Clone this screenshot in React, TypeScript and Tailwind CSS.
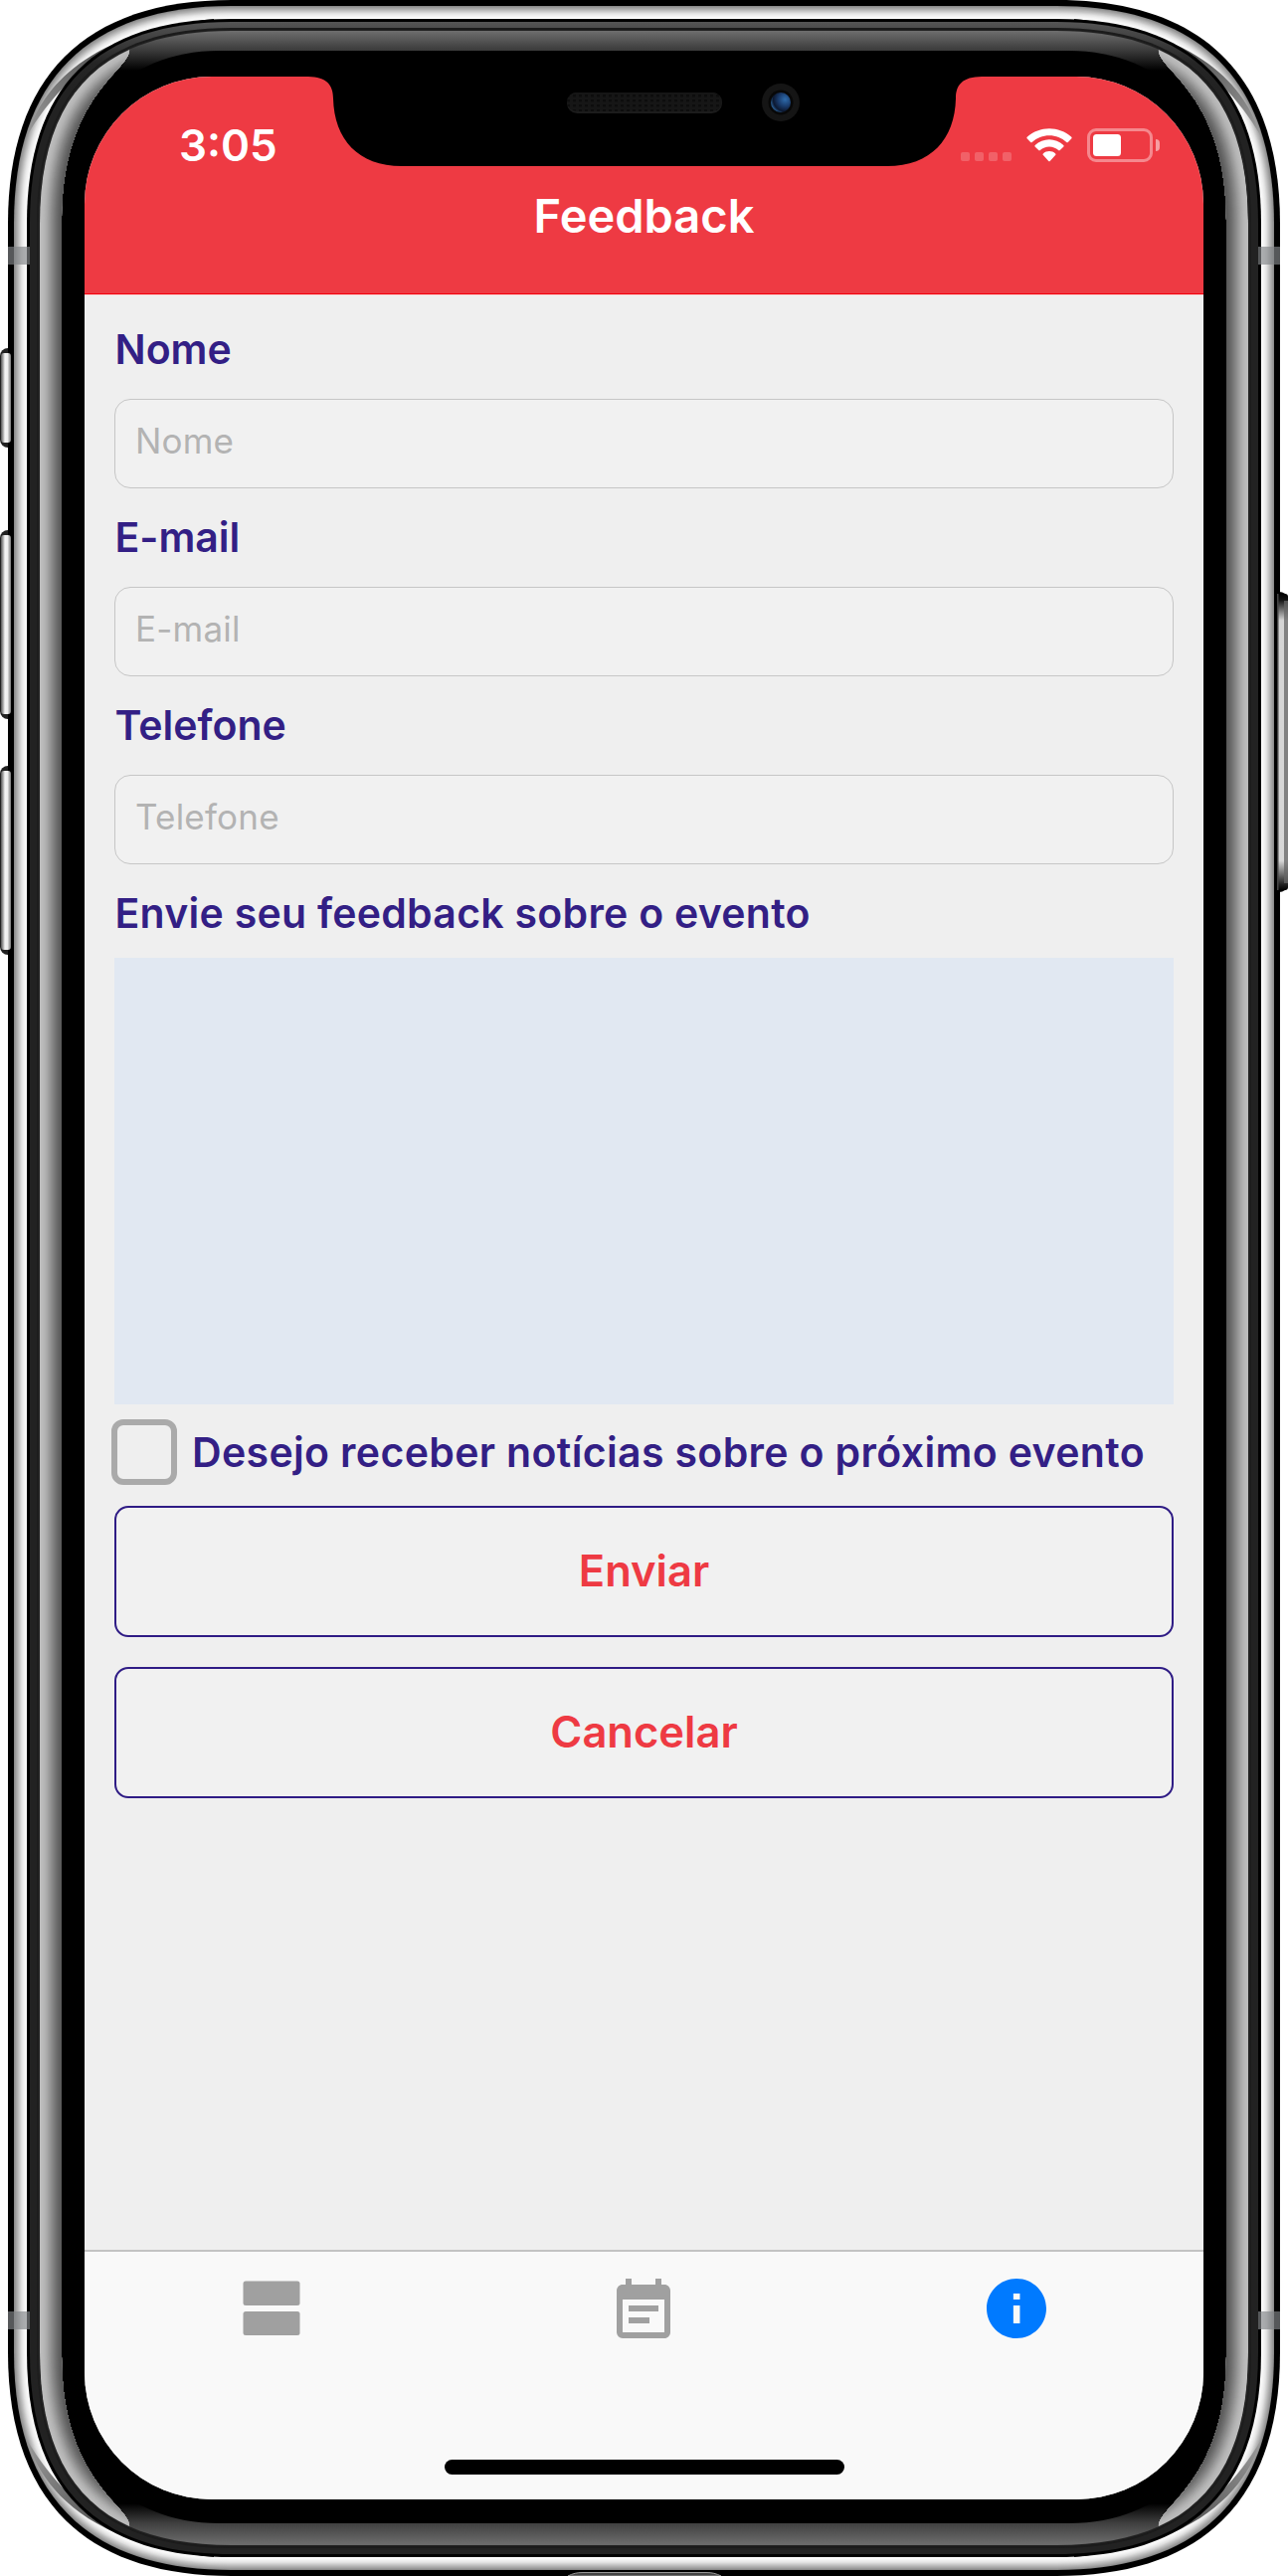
import type { ReactNode } from "react";

const W = 1295;
const H = 2590;

/* Rounded outline with soft corners, inset by dx / dy from the phone's edge. */
function outline(dx: number, dy: number) {
  const d = (dx + dy) / 2;
  const l = 8 + dx;
  const r = W - 8 - dx;
  const t = dy;
  const b = H - dy;
  const ex = 225 - dx;
  const ey = 225 - dy;
  const k = ((8 * (57 - 0.293 * d)) / (225 - d) - 1) / 3;
  const kx = ex * k;
  const ky = ey * k;
  return `M${l} ${t + ey}C${l} ${t + ky} ${l + kx} ${t} ${l + ex} ${t}H${r - ex}C${r - kx} ${t} ${r} ${t + ky} ${r} ${t + ey}V${b - ey}C${r} ${b - ky} ${r - kx} ${b} ${r - ex} ${b}H${l + ex}C${l + kx} ${b} ${l} ${b - ky} ${l} ${b - ey}Z`;
}

const silver = ["#8c8c8c", "#999999", "#a5a5a5", "#b0b0b0", "#bcbcbc", "#c8c8c8", "#d4d4d4", "#e0e0e0", "#e8e8e8", "#efefef", "#f4f4f4", "#f8f8f8", "#fcfcfc"];
const sheen = ["#bcbcbc", "#bbbbbb", "#bababa", "#b8b8b8", "#b5b5b5", "#b1b1b1", "#acacac", "#a7a7a7", "#a1a1a1", "#9b9b9b", "#959595", "#8e8e8e", "#888888", "#828282", "#7c7c7c", "#767676", "#707070", "#6b6b6b", "#666666", "#616161", "#5d5d5d", "#595959"];

const corners = ["", `translate(${W} 0) scale(-1 1)`, `translate(0 ${H}) scale(1 -1)`, `translate(${W} ${H}) scale(-1 -1)`];
const leftSheen = "M40 222C40 128 72 74 130 49C131 54 127 60 117 71C82 108 62 152 62 222V2368C62 2438 82 2482 117 2519C127 2530 131 2536 130 2541C72 2516 40 2462 40 2368Z";

function PhoneFrame() {
  return (
    <svg className="absolute inset-0 h-[2590px] w-[1295px]" viewBox="0 0 1295 2590" aria-hidden="true">
      <defs>
        <linearGradient id="glass" x1="0" y1="31" x2="0" y2="2557" gradientUnits="userSpaceOnUse">
          <stop offset="0" stopColor="#6e6e6e" />
          <stop offset="0.0079" stopColor="#3a3a3a" />
          <stop offset="0.0158" stopColor="#000" />
          <stop offset="0.9842" stopColor="#000" />
          <stop offset="0.9921" stopColor="#404040" />
          <stop offset="1" stopColor="#6a6a6a" />
        </linearGradient>
        <linearGradient id="rim" x1="0" y1="22" x2="0" y2="90" gradientUnits="userSpaceOnUse">
          <stop offset="0" stopColor="#555" />
          <stop offset="0.12" stopColor="#4a4a4a" />
          <stop offset="0.6" stopColor="#252525" />
          <stop offset="1" stopColor="#222" />
        </linearGradient>
        <linearGradient id="crescent" x1="27" y1="135" x2="215" y2="20" gradientUnits="userSpaceOnUse">
          <stop offset="0" stopColor="#999" />
          <stop offset="0.35" stopColor="#666" />
          <stop offset="0.8" stopColor="#2c2c2c" />
          <stop offset="1" stopColor="#111" />
        </linearGradient>
        <linearGradient id="key" x1="0" x2="1">
          <stop offset="0" stopColor="#555" />
          <stop offset="0.25" stopColor="#b5b5b5" />
          <stop offset="0.4" stopColor="#f5f5f5" />
          <stop offset="0.65" stopColor="#eee" />
          <stop offset="1" stopColor="#777" />
        </linearGradient>
        <linearGradient id="power" x1="0" x2="0" y1="0" y2="1">
          <stop offset="0" stopColor="#000" />
          <stop offset="0.02" stopColor="#111" />
          <stop offset="0.09" stopColor="#d5d5d5" />
          <stop offset="0.9" stopColor="#d8d8d8" />
          <stop offset="0.98" stopColor="#222" />
          <stop offset="1" stopColor="#000" />
        </linearGradient>
        <clipPath id="sheenLeft"><path d={leftSheen} /></clipPath>
      </defs>

      {/* side keys */}
      {[[350, 100], [533, 190], [770, 190]].map(([y, h]) => (
        <rect key={y} x="0" y={y} width="24" height={h} rx="8" fill="#222" />
      ))}
      <path d="M1280 595H1286Q1293 595 1295 602V890Q1293 897 1286 897H1280Z" fill="#000" />

      <path d={outline(0, 0)} fill="#000" />
      {[[350, 100], [533, 190], [770, 190]].map(([y, h]) => (
        <rect key={y} x="1" y={y + 5} width="10" height={h - 10} rx="3" fill="url(#key)" />
      ))}
      <rect x="1284" y="597" width="11" height="298" rx="3" fill="url(#power)" />
      <rect x="1284" y="597" width="1.5" height="298" fill="#444" />
      <rect x="1291" y="604" width="4" height="284" fill="#666" opacity="0.75" />
      {silver.map((c, i) => <path key={c} d={outline(6 + i, 6 + i)} fill={c} />)}
      {corners.map((t) => (
        <path key={t} transform={t || undefined} d="M27 137C40 96 78 34 215 19V23C142 24 72 60 27 137Z" fill="url(#crescent)" />
      ))}
      <path d={outline(19, 19)} fill="#000" />
      <path d={outline(22, 22)} fill="url(#rim)" />
      <path d={outline(29, 28)} fill="#1b1b1b" />
      <path d={outline(30, 30)} fill="#222" />
      <path d={outline(32, 31)} fill="url(#glass)" />
      <path d="M62 216C62 120 125 51 220 51H1075C1170 51 1233 120 1233 216V2374C1233 2470 1170 2537 1075 2537H220C125 2537 62 2470 62 2374Z" fill="#000" />
      {corners.slice(0, 2).map((t) => (
        <g key={t} transform={t || undefined}>
          <g clipPath="url(#sheenLeft)">
            {sheen.map((c, i) => <path key={c} d={outline(32 + i, 31 + i)} fill={c} />)}
          </g>
        </g>
      ))}
      {/* antenna bands */}
      {[8, 1265].map((x) => [248, 2324].map((y) => (
        <rect key={`${x}-${y}`} x={x} y={y} width="22" height="18" fill="#828688" opacity="0.66" />
      )))}
      {/* lightning port */}
      <path d="M571 2590C576 2587.500 580 2586.500 586 2586.500H710C716 2586.500 720 2587.500 725 2590Z" fill="#444" stroke="#999" />
    </svg>
  );
}

function Notch() {
  return (
    <svg className="absolute top-0 left-[225px] h-[91px] w-[677px]" viewBox="310 77 677 91" aria-hidden="true">
      <defs>
        <pattern id="mesh" width="6" height="5" patternUnits="userSpaceOnUse">
          <rect width="6" height="5" fill="#161616" />
          <rect width="3" height="2.500" fill="#0d0d0d" />
        </pattern>
        <radialGradient id="lens" cx="0.72" cy="0.35" r="0.75">
          <stop offset="0" stopColor="#2e6bab" />
          <stop offset="0.45" stopColor="#1a3c6d" />
          <stop offset="0.8" stopColor="#0c1830" />
          <stop offset="1" stopColor="#2a5f95" />
        </radialGradient>
      </defs>
      <path d="M308 76V77C328 77 335 85 335 99C336 140 360 167 404 167H892C936 167 960 140 961 99C961 85 968 77 988 77V76Z" fill="#000" />
      <rect x="570" y="93" width="156" height="21" rx="10.500" fill="#1c1c1c" />
      <rect x="570" y="93" width="156" height="19" rx="9.500" fill="url(#mesh)" />
      <circle cx="785" cy="103" r="19" fill="#151515" />
      <circle cx="785" cy="103" r="12.500" fill="#080808" />
      <circle cx="785" cy="103" r="10" fill="url(#lens)" />
    </svg>
  );
}

function StatusIcons() {
  return (
    <div className="flex items-center">
      <div className="mt-[23px] flex gap-[5px]">
        {[0, 1, 2, 3].map((i) => <span key={i} className="size-[9px] rounded-[2px] bg-white/20" />)}
      </div>
      <svg className="ml-[15px] h-[34px] w-[46px]" viewBox="0 0 46 34" aria-hidden="true">
        <path d="M0.600 10.300Q0 9.500 0.700 8.800C7 3 15 0.200 23 0.200S39 3 45.300 8.800Q46 9.500 45.400 10.300L41.800 13.900Q41.100 14.500 40.300 13.900C35.500 9.500 29.500 7.200 23 7.200S10.500 9.500 5.700 13.900Q4.900 14.500 4.200 13.900Z" fill="#fff" />
        <path d="M8.600 18.500Q8 17.800 8.700 17.100C12.700 13.400 17.800 11.300 23 11.300S33.300 13.400 37.300 17.100Q38 17.800 37.400 18.500L33.700 22.100Q33 22.700 32.200 22.100C29.500 19.700 26.400 18.400 23 18.400S16.500 19.700 13.800 22.100Q13 22.700 12.300 22.100Z" fill="#fff" />
        <path d="M16.700 26.700Q16.100 26 16.800 25.400C18.600 23.800 20.800 23 23 23S27.400 23.800 29.200 25.400Q29.900 26 29.300 26.700L23.700 33Q23 33.700 22.300 33Z" fill="#fff" />
      </svg>
      <div className="ml-[15px] flex items-center">
        <div className="h-[34px] w-[66px] rounded-[9px] border-[3px] border-white/40 p-[3px]">
          <div className="h-[22px] w-[28px] rounded-[3.5px] bg-white" />
        </div>
        <div className="ml-[3px] h-[12px] w-[4px] rounded-r-full bg-white/50" />
      </div>
    </div>
  );
}

function Field({ label, type = "text" }: { label: string; type?: string }) {
  return (
    <label className="block">
      <span className="flex h-[99px] items-center pl-[0.5px] text-[41px] font-semibold text-[#331f85]">{label}</span>
      <input
        type={type}
        placeholder={label}
        className="block h-[90px] w-full rounded-[16px] border-[1.5px] border-[#c6c6c6] bg-[#f1f1f1] px-[20px] pb-[7px] text-[35px] tracking-[0.2px] outline-none placeholder:text-[#b3b3b3] placeholder:opacity-100"
      />
    </label>
  );
}

function ActionButton({ children }: { children: ReactNode }) {
  return (
    <button className="flex h-[132px] w-full items-center justify-center rounded-[14px] border-2 border-[#2f1c85] bg-[#f1f1f1] text-[43.5px] font-semibold text-[#ee3a43]">
      {children}
    </button>
  );
}

function TabBar() {
  return (
    <nav className="flex h-[251px] shrink-0 flex-col items-center border-t-2 border-[#c3c3c3] bg-[#f9f9f9]">
      <div className="grid w-full grid-cols-3 pt-[21px]">
        <button className="flex justify-center" aria-label="Lista">
          <svg className="size-[72px]" viewBox="0 0 72 72" fill="#a0a0a0">
            <rect x="7.500" y="8.500" width="57" height="24.500" rx="2.500" />
            <rect x="7.500" y="39" width="57" height="24" rx="2.500" />
          </svg>
        </button>
        <button className="flex justify-center pr-[2px]" aria-label="Agenda">
          <svg className="mt-[3px] size-[72px]" viewBox="0 0 24 24" fill="#a0a0a0">
            <path d="M17 10H7v2h10v-2zm2-7h-1V1h-2v2H8V1H6v2H5c-1.110 0-1.990.9-1.990 2L3 19a2 2 0 0 0 2 2h14c1.100 0 2-.9 2-2V5c0-1.100-.9-2-2-2zm0 16H5V8h14v11zm-5-5H7v2h7v-2z" />
          </svg>
        </button>
        <button className="flex justify-center pr-[2px]" aria-label="Sobre">
          <svg className="size-[72px]" viewBox="0 0 24 24" fill="#007aff">
            <path d="M12 2C6.480 2 2 6.480 2 12s4.480 10 10 10 10-4.480 10-10S17.520 2 12 2zm1.150 15h-2.200v-6h2.200v6zm0-8h-2.200V7h2.200v2z" />
          </svg>
        </button>
      </div>
      <div className="mt-auto mb-[25px] h-[15px] w-[402px] rounded-[8px] bg-black" />
    </nav>
  );
}

export default function App() {
  return (
    <div className="relative h-[2590px] w-[1295px] overflow-hidden bg-white font-[Inter,sans-serif]">
      <PhoneFrame />
      <div className="relative pt-[77px] pl-[85px]">
        <div className="relative flex h-[2436px] w-[1125px] flex-col overflow-hidden rounded-[128px] bg-[#efefef]">
          <header className="h-[220px] shrink-0 border-b border-[#f9d5d5] bg-[#ee3a43] text-white shadow-[inset_0_-1px_0_#f2000c]">
            <div className="flex h-[118px] items-center justify-between pt-[20px] pr-[44px] pl-[95px]">
              <span className="text-[44px] font-semibold">3:05</span>
              <StatusIcons />
            </div>
            <h1 className="-mt-[5px] text-center text-[47px] leading-[54px] font-semibold">Feedback</h1>
          </header>
          <Notch />

          <form className="flex flex-1 flex-col px-[30px] pt-[5px]">
            <Field label="Nome" />
            <Field label="E-mail" type="email" />
            <Field label="Telefone" type="tel" />
            <label className="block">
              <span className="flex h-[94px] items-center pt-[5px] pl-[0.5px] text-[41px] font-semibold tracking-[0.27px] text-[#331f85]">
                Envie seu feedback sobre o evento
              </span>
              <textarea className="block h-[449px] w-full resize-none bg-[#e1e8f2] outline-none" />
            </label>
            <label className="mt-[15px] -ml-[3px] flex items-center gap-[15px] whitespace-nowrap">
              <input type="checkbox" className="size-[66px] shrink-0 appearance-none rounded-[12px] border-[6px] border-[#aaaaaa]" />
              <span className="pt-[2px] text-[41px] font-semibold tracking-[0.35px] text-[#331f85]">Desejo receber notícias sobre o próximo evento</span>
            </label>
            <div className="mt-[21px] flex flex-col gap-[30px]">
              <ActionButton>Enviar</ActionButton>
              <ActionButton>Cancelar</ActionButton>
            </div>
          </form>
          <TabBar />
        </div>
      </div>
    </div>
  );
}
